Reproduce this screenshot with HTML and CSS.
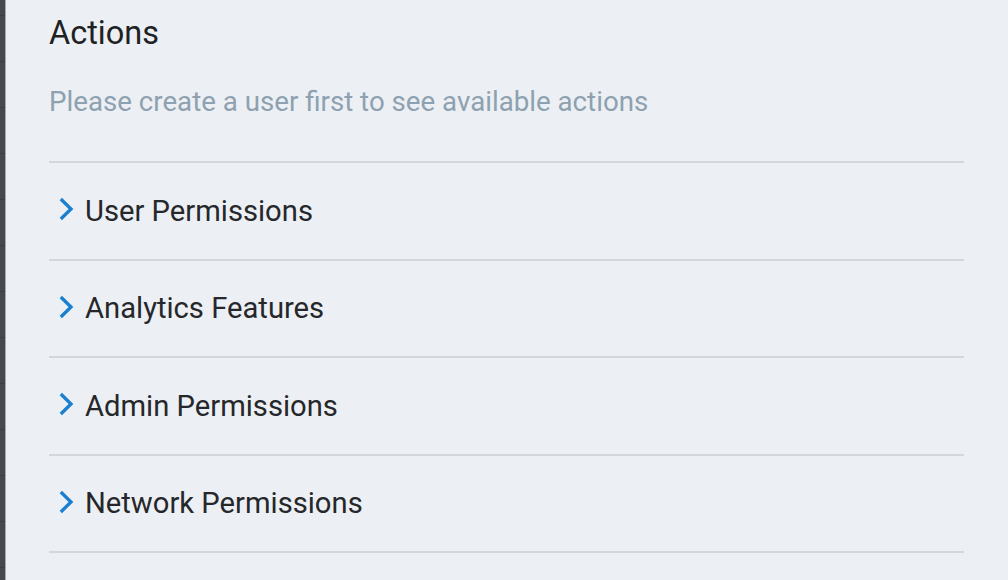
FILE: index.html
```html
<!DOCTYPE html>
<html>
<head>
<meta charset="utf-8">
<link rel="stylesheet" href="styles.css">
</head>
<body>
<div class="page">
  <div class="rail"></div>
  <main class="panel">
    <h1 class="title">Actions</h1>
    <p class="hint">Please create a user first to see available actions</p>
    <ul class="list">
      <li class="row"><svg class="chev" viewBox="0 0 16 24"><path d="M2.8 2 L13 12 L2.8 22"/></svg><span>User Permissions</span></li>
      <li class="row"><svg class="chev" viewBox="0 0 16 24"><path d="M2.8 2 L13 12 L2.8 22"/></svg><span>Analytics Features</span></li>
      <li class="row"><svg class="chev" viewBox="0 0 16 24"><path d="M2.8 2 L13 12 L2.8 22"/></svg><span>Admin Permissions</span></li>
      <li class="row"><svg class="chev" viewBox="0 0 16 24"><path d="M2.8 2 L13 12 L2.8 22"/></svg><span>Network Permissions</span></li>
    </ul>
  </main>
</div>
</body>
</html>
```
FILE: styles.css
```css
* { box-sizing: border-box; }
html, body { margin: 0; padding: 0; height: 100%; }
body {
  background: #ecf0f4;
  font-family: Roboto, "Liberation Sans", sans-serif;
  overflow: hidden;
}
.page { display: flex; height: 580px; }
.rail {
  width: 6px;
  flex: none;
  background-color: #47494d;
  background-image: repeating-linear-gradient(to bottom, transparent 0, transparent 15px, #3c3e42 15px, #3c3e42 16px, transparent 16px, transparent 46px);
  border-right: 1px solid #a4a8ad;
}
.panel {
  flex: 1;
  padding: 0 44px 0 43px;
}
.title {
  margin: 0;
  padding-top: 15px;
  font-size: 32.5px;
  font-weight: 400;
  line-height: 36px;
  color: #202123;
}
.hint {
  margin: 35px 0 0;
  font-size: 27.7px;
  line-height: 32px;
  color: #8ea1b0;
}
.list {
  list-style: none;
  margin: 43px 0 0;
  padding: 0;
  border-top: 2px solid #d3d6da;
}
.row {
  display: flex;
  align-items: center;
  height: 97.5px;
  border-bottom: 2px solid #d3d6da;
  font-size: 29.2px;
  color: #26272a;
  padding-left: 9px;
}
.chev {
  width: 16px;
  height: 24px;
  margin: -3px 11px 0 0;
  flex: none;
}
.chev path {
  fill: none;
  stroke: #1a7fcf;
  stroke-width: 3.3;
  stroke-linecap: butt;
  stroke-linejoin: miter;
}
```
